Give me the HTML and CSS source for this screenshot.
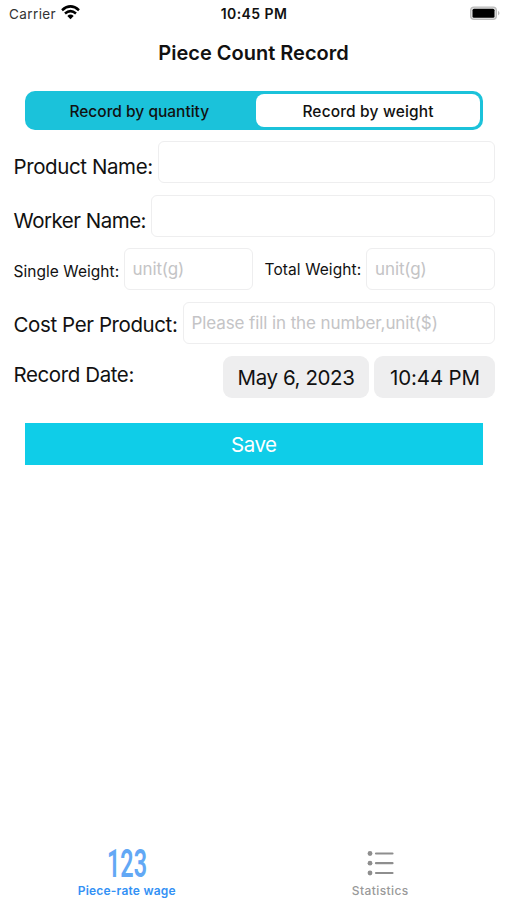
FILE: index.html
```html
<!DOCTYPE html>
<html lang="en">
<head>
<meta charset="utf-8">
<title>Piece Count Record</title>
<link rel="stylesheet" href="styles.css">
</head>
<body>
<header class="status">
  <div class="carrier"><span>Carrier</span>
    <svg width="19" height="15" viewBox="0 0 19 15"><g fill="none" stroke="#000" stroke-width="2.500"><path d="M1 5.200Q9.500-2.400 18 5.200"/><path d="M4 8.500Q9.500 3.700 15 8.500"/></g><path d="M6.300 11Q9.500 8.200 12.700 11L9.500 14.200Z"/></svg>
  </div>
  <span class="clock">10:45 PM</span>
  <svg class="battery" width="32" height="16" viewBox="0 0 32 16"><rect x="1" y="1.500" width="27" height="13.500" rx="4" fill="#bcbcbc"/><rect x="2.300" y="2.800" width="24.400" height="10.900" rx="3" fill="#e4e4e4"/><rect x="3.500" y="3.800" width="22" height="9" rx="1.500"/><path d="M29 5.800q3 2.400 0 4.800z" fill="#bcbcbc"/></svg>
</header>
<h1 class="title">Piece Count Record</h1>
<main>
  <div class="segments">
    <button class="segment quantity">Record by quantity</button>
    <button class="segment selected">Record by weight</button>
  </div>
  <form class="form">
    <div class="row"><label class="product">Product Name:</label><div class="field"></div></div>
    <div class="row"><label class="worker">Worker Name:</label><div class="field"></div></div>
    <div class="row"><label class="single">Single Weight:</label><div class="field">unit(g)</div><label class="total">Total Weight:</label><div class="field">unit(g)</div></div>
    <div class="row"><label class="cost">Cost Per Product:</label><div class="field">Please fill in the number,unit($)</div></div>
    <div class="row"><label class="date">Record Date:</label><div class="pill day">May 6, 2023</div><div class="pill time">10:44 PM</div></div>
  </form>
  <button class="save">Save</button>
</main>
<nav class="tabs">
  <div class="tab active">
    <svg width="42" height="32" viewBox="0 0 42 32"><text x="1" y="30" textLength="40" lengthAdjust="spacingAndGlyphs">123</text></svg>
    <span>Piece-rate wage</span>
  </div>
  <div class="tab">
    <svg width="28" height="32" viewBox="0 0 28 32"><g fill="#8e8e8e"><circle cx="4" cy="6.500" r="2.400"/><circle cx="4" cy="16.200" r="2.400"/><circle cx="4" cy="26" r="2.400"/></g><path d="M10 6.500H26.500M10 16.200H26.500M10 26H26.500" stroke="#8e8e8e" stroke-width="2.200" stroke-linecap="round"/></svg>
    <span>Statistics</span>
  </div>
</nav>
</body>
</html>
```
FILE: styles.css
```css
* { box-sizing: border-box; }
body {
  margin: 0;
  height: 900px;
  display: flex;
  flex-direction: column;
  overflow: hidden;
  background: #fff;
  color: #111;
  font-family: Inter, "Liberation Sans", sans-serif;
  white-space: nowrap;
}
button { border: 0; padding: 0; font-family: inherit; color: inherit; }
svg { display: block; flex: none; overflow: visible; }
.status {
  display: grid;
  grid-template-columns: 1fr auto 1fr;
  height: 28px;
  padding: 0 6px 0 9px;
  line-height: 28px;
  font-size: 13.5px;
}
.carrier { display: flex; gap: 5px; color: #333; letter-spacing: 0.4px; }
.carrier svg { margin-top: 5px; }
.clock { font-size: 14px; font-weight: 600; letter-spacing: 0.4px; margin-left: -2px; }
.battery { justify-self: end; margin-top: 5px; }
.title {
  margin: 8.500px 0 0;
  height: 32px;
  line-height: 32px;
  text-align: center;
  font-size: 20px;
  font-weight: 600;
}
.segments {
  display: flex;
  height: 38.500px;
  margin: 22.900px 24.500px 0 25px;
  padding: 2.500px;
  border-radius: 10px;
  background: #1bc2da;
}
.segment {
  width: 228.500px;
  flex: none;
  border-radius: 8px;
  background: none;
  font-size: 15.5px;
  font-weight: 500;
  padding-top: 1px;
}
.quantity { padding-right: 5px; }
.selected { flex: 1; background: #fff; letter-spacing: 0.15px; }
.form {
  display: flex;
  flex-direction: column;
  gap: 11.800px;
  margin: 11px 12px 0 13.500px;
}
.row { display: flex; height: 42px; }
label { line-height: 51px; font-size: 20.5px; letter-spacing: -0.4px; flex: none; }
.product { width: 144.500px; }
.worker { width: 137px; line-height: 52px; letter-spacing: -0.5px; }
.single { width: 110px; font-size: 15.5px; line-height: 48px; letter-spacing: 0.05px; }
.total { width: 101.500px; margin-left: 12px; font-size: 15.5px; line-height: 44px; letter-spacing: 0.1px; }
.cost { width: 169px; line-height: 45px; }
.date { flex: 1; line-height: 37px; }
.field {
  flex: 1;
  min-width: 0;
  padding-left: 8px;
  border: 1px solid #eeeeef;
  border-radius: 6px;
  line-height: 41px;
  font-size: 17px;
  letter-spacing: -0.1px;
  color: #c4c4c6;
}
.pill {
  border-radius: 9px;
  background: #eeeeef;
  line-height: 44px;
  text-align: center;
  font-size: 20.5px;
}
.day { width: 146px; margin-right: 5px; letter-spacing: -0.4px; }
.time { width: 121px; padding-left: 1px; letter-spacing: -0.15px; }
.save {
  display: block;
  width: 457.500px;
  height: 42.500px;
  margin: 24.900px 0 0 25px;
  background: #0fcde8;
  color: #fff;
  font-size: 20.5px;
  letter-spacing: -0.5px;
}
.tabs { display: flex; margin-top: auto; height: 53px; }
.tab {
  flex: 1;
  display: flex;
  flex-direction: column;
  align-items: center;
  color: #999;
  font-size: 12px;
  font-weight: 500;
  line-height: 16px;
  letter-spacing: 0.4px;
}
.tab span { margin-top: 4px; }
.tab text { font: 600 39px Roboto, sans-serif; letter-spacing: 0; fill: #62a8f5; }
.active { color: #3391f5; font-weight: 600; letter-spacing: 0.2px; }
```
